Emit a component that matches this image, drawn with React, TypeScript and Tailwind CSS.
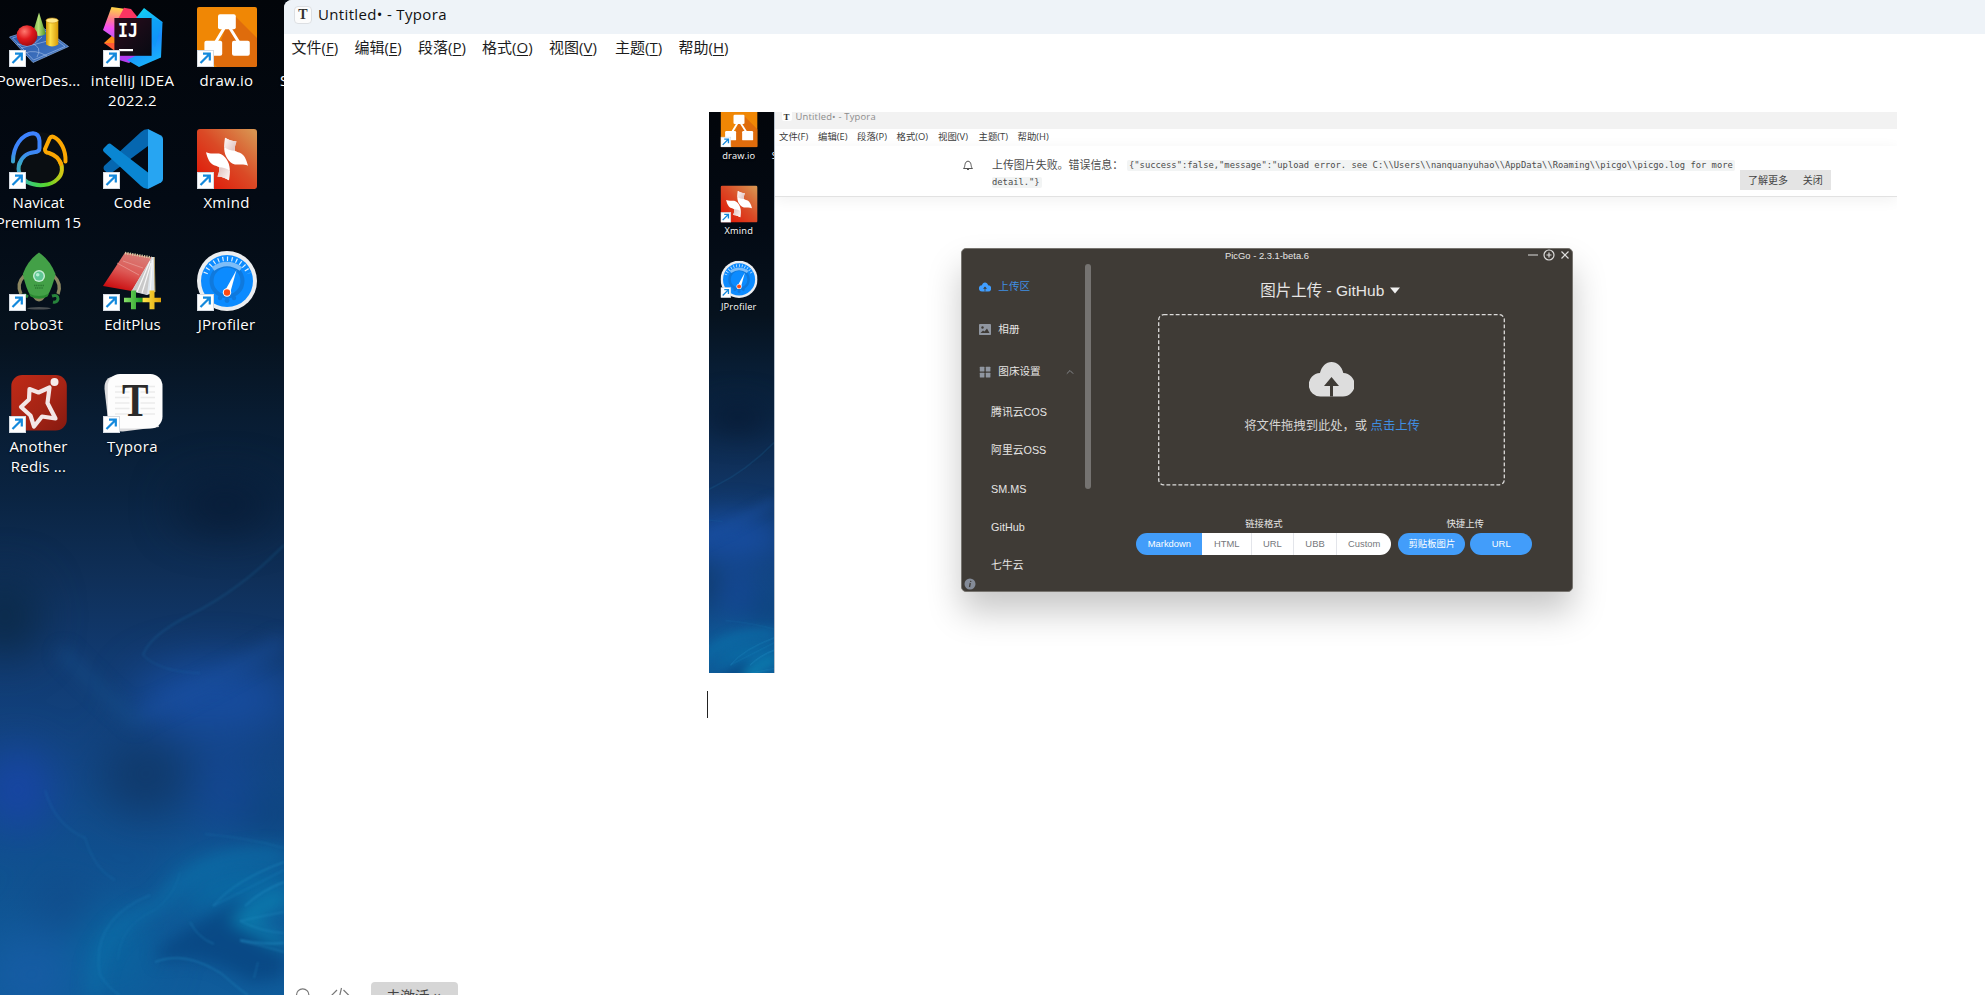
import type { ReactNode } from 'react';

const UI_FONT = "font-['Open_Sans','Noto_Sans_CJK_SC',sans-serif]";
const ARIAL_FONT = "font-['Liberation_Sans','Noto_Sans_CJK_SC',sans-serif]";

function Wallpaper() {
  return (
    <svg className="absolute inset-0" width="284" height="995" viewBox="0 0 284 995" preserveAspectRatio="none">
      <defs>
        <linearGradient id="wp-base" x1="0" y1="0" x2="0" y2="1">
          <stop offset="0" stopColor="#02050a" />
          <stop offset="0.2" stopColor="#030a14" />
          <stop offset="0.34" stopColor="#06121e" />
          <stop offset="0.42" stopColor="#081c32" />
          <stop offset="0.5" stopColor="#0a2442" />
          <stop offset="0.58" stopColor="#0f2f58" />
          <stop offset="0.66" stopColor="#113a70" />
          <stop offset="0.76" stopColor="#124583" />
          <stop offset="0.86" stopColor="#10508f" />
          <stop offset="1" stopColor="#0f5c9b" />
        </linearGradient>
        <filter id="wp-soft" x="-60%" y="-60%" width="220%" height="220%" colorInterpolationFilters="sRGB"><feGaussianBlur stdDeviation="22" /></filter>
        <filter id="wp-mid" x="-60%" y="-60%" width="220%" height="220%" colorInterpolationFilters="sRGB"><feGaussianBlur stdDeviation="8" /></filter>
        <filter id="wp-fine" x="-20%" y="-20%" width="140%" height="140%" colorInterpolationFilters="sRGB"><feGaussianBlur stdDeviation="0.9" /></filter>
      </defs>
      <rect width="284" height="995" fill="url(#wp-base)" />
      <g filter="url(#wp-soft)">
        <ellipse cx="5" cy="616" rx="34" ry="40" fill="#0b2a49" />
        <ellipse cx="225" cy="505" rx="50" ry="24" fill="#081c37" />
        <ellipse cx="215" cy="700" rx="80" ry="38" fill="#174c9e" />
        <ellipse cx="18" cy="790" rx="34" ry="40" fill="#1845a6" />
        <ellipse cx="145" cy="775" rx="44" ry="40" fill="#103a6c" />
        <ellipse cx="225" cy="790" rx="28" ry="36" fill="#15469a" opacity="0.7" />
        <ellipse cx="272" cy="815" rx="30" ry="16" fill="#0c3f78" />
        <ellipse cx="240" cy="890" rx="70" ry="30" fill="#0a6ca6" />
        <ellipse cx="115" cy="950" rx="40" ry="44" fill="#0b639f" />
        <ellipse cx="30" cy="975" rx="44" ry="40" fill="#165ca4" />
        <ellipse cx="65" cy="905" rx="24" ry="20" fill="#124887" />
      </g>
      <g filter="url(#wp-mid)">
        <path d="M158 950 Q190 925 244 897 L232 925 L284 945 V978 L250 982 Q205 950 158 962Z" fill="#084782" opacity="0.85" />
        <path d="M60 650 Q110 700 140 725" stroke="#154f8c" strokeWidth="12" fill="none" opacity="0.5" />
        <path d="M284 640 Q200 690 140 715" stroke="#1a4f9f" strokeWidth="14" fill="none" opacity="0.45" />
        <path d="M284 855 Q200 850 160 905 Q90 930 95 995" stroke="#0c70aa" strokeWidth="14" fill="none" opacity="0.6" />
        <path d="M284 895 L240 920 L284 945" stroke="#0c86b4" strokeWidth="14" fill="none" opacity="0.7" />
      </g>
      <g filter="url(#wp-fine)" fill="none" stroke="#2797cc" strokeWidth="1">
        <path d="M284 545 Q240 590 190 615 Q150 635 143 655" opacity="0.16" strokeWidth="2" />
        <path d="M143 655 Q160 672 200 673" opacity="0.14" strokeWidth="1.5" />
        <path d="M284 862 Q235 880 213 906" opacity="0.6" />
        <path d="M284 870 Q245 890 213 906" opacity="0.4" />
        <path d="M284 882 Q262 890 245 906" opacity="0.8" />
        <path d="M284 933 Q262 932 240 921 Q262 916 284 912" opacity="0.5" />
        <path d="M284 943 Q265 945 240 940" opacity="0.8" />
        <path d="M284 952 Q260 945 240 941" opacity="0.5" />
        <path d="M155 962 Q185 950 222 974 Q240 990 248 995" opacity="0.6" />
        <path d="M190 922 Q198 938 214 944" opacity="0.5" />
        <path d="M180 872 Q175 895 155 910 Q120 925 118 960" opacity="0.2" />
        <path d="M150 895 Q90 920 100 975 Q110 990 120 995" opacity="0.18" strokeWidth="2" />
        <path d="M45 790 Q55 825 85 838 Q95 870 115 880" opacity="0.14" strokeWidth="2" />
        <path d="M284 848 Q250 838 205 834" opacity="0.25" />
        <path d="M258 962 L254 978" opacity="0.4" />
      </g>
    </svg>
  );
}

function PowerDesignerIcon() {
  return (
    <>
      <defs>
        <radialGradient id="pd-ball" cx="0.38" cy="0.3" r="0.75"><stop offset="0" stopColor="#ff7a70" /><stop offset="0.5" stopColor="#e0191d" /><stop offset="1" stopColor="#9c0b10" /></radialGradient>
        <linearGradient id="pd-cyl" x1="0" x2="1"><stop offset="0" stopColor="#c98d06" /><stop offset="0.35" stopColor="#ffe14a" /><stop offset="1" stopColor="#d79a08" /></linearGradient>
        <linearGradient id="pd-cone" x1="0" x2="1"><stop offset="0" stopColor="#6fa83a" /><stop offset="0.45" stopColor="#b6e27a" /><stop offset="1" stopColor="#4b8f22" /></linearGradient>
        <linearGradient id="pd-sheet" x1="0" y1="0" x2="1" y2="1"><stop offset="0" stopColor="#1e4fa3" /><stop offset="1" stopColor="#4b7fc9" /></linearGradient>
      </defs>
      <path d="M0.5 30 L33 20 L59.5 39.5 L24 55.5Z" fill="url(#pd-sheet)" stroke="#8fb0de" strokeWidth="0.7" />
      <path d="M3.5 31 L33 22 L56 39.5 L24.5 53Z M8 37 Q22 42 33 30 M16 46 Q26 42 38 49 M12 41 L46 32 M22 36 q12 4 6 14" fill="none" stroke="#a9c3ea" strokeWidth="0.6" />
      <path d="M30 5.5 L23.5 27 Q30 31 36.8 27Z" fill="url(#pd-cone)" />
      <circle cx="18" cy="28.6" r="10.4" fill="url(#pd-ball)" />
      <path d="M37 13.5 V37.5 Q43 41.5 49.3 37.5 V13.5Z" fill="url(#pd-cyl)" />
      <ellipse cx="43.1" cy="13.5" rx="6.1" ry="2.5" fill="#ffe98a" stroke="#c99110" strokeWidth="0.6" />
    </>
  );
}

function IntellijIcon() {
  return (
    <>
      <defs>
        <linearGradient id="ij-a" x1="0.2" y1="0" x2="0.1" y2="1"><stop offset="0" stopColor="#ffd24a" /><stop offset="0.35" stopColor="#ff7f8a" /><stop offset="0.65" stopColor="#f64ff0" /><stop offset="1" stopColor="#b75cf5" /></linearGradient>
        <linearGradient id="ij-b" x1="0.3" y1="0" x2="0.6" y2="1"><stop offset="0" stopColor="#10d5f2" /><stop offset="0.6" stopColor="#1a8cff" /><stop offset="1" stopColor="#18b6fb" /></linearGradient>
        <linearGradient id="ij-c" x1="0" y1="0" x2="1" y2="1"><stop offset="0" stopColor="#2b0c1c" /><stop offset="1" stopColor="#070a12" /></linearGradient>
      </defs>
      <path d="M1 36 L12 26 V41Z" fill="#ff8a1c" />
      <path d="M8.5 0 L23 2 L16 24 L11.5 31 L0 23Z" fill="url(#ij-a)" />
      <path d="M21 0.8 L28 2 L36 12 L30 16 L14 14Z" fill="#fb3562" />
      <path d="M12 40 L16 53 L26 56 L38 48 L12 48Z" fill="#b23cf0" />
      <path d="M12 36 L1 36 L12 44Z" fill="#ff5a36" />
      <path d="M41 1 L59.5 15 L58 50.5 L36 60 L24 53 L34 48 H46 V12 L33 11Z" fill="url(#ij-b)" />
      <path d="M48.5 11 L59.5 15 L52 40 L48.5 34Z" fill="#0a9bf5" opacity="0.6" />
      <rect x="11.4" y="11" width="37.2" height="37.8" fill="url(#ij-c)" />
      <text x="15" y="29.6" textLength="20" lengthAdjust="spacingAndGlyphs" className="font-['DejaVu_Sans_Mono',monospace] text-[19px] font-bold" fill="#fff">IJ</text>
      <rect x="16" y="42" width="14" height="2.2" fill="#fff" />
    </>
  );
}

function DrawIoIcon() {
  return (
    <>
      <rect width="60" height="60" rx="2" fill="#f08705" />
      <path d="M38 9 L60 31 V58 Q60 60 58 60 H20 L8 48 L24 33.5 L29 20Z" fill="#df6c0c" />
      <path d="M29 18 L17 38 M31 18 L43.5 38" stroke="#fff" strokeWidth="3" />
      <rect x="21" y="7.2" width="17.8" height="15" rx="2" fill="#fff" />
      <rect x="7.4" y="33.7" width="17.8" height="15" rx="2" fill="#fff" />
      <rect x="35" y="33.7" width="17.8" height="15" rx="2" fill="#fff" />
    </>
  );
}

function NavicatIcon() {
  return (
    <>
      <defs>
        <linearGradient id="nv-body" x1="0" y1="0.4" x2="1" y2="0.3"><stop offset="0" stopColor="#3fa6c8" /><stop offset="0.3" stopColor="#3fd160" /><stop offset="0.6" stopColor="#5ad52a" /><stop offset="1" stopColor="#d8c713" /></linearGradient>
        <linearGradient id="nv-left" x1="0" y1="0" x2="0" y2="1"><stop offset="0" stopColor="#3d82ff" /><stop offset="0.6" stopColor="#3d86f8" /><stop offset="1" stopColor="#3aa9c6" /></linearGradient>
      </defs>
      <circle cx="30" cy="30" r="27" fill="#0a0e12" />
      <g fill="none" strokeWidth="4" strokeLinecap="round" strokeLinejoin="round">
        <path d="M10.6 34 C7.500 42 12 49 18 53 C28 58 42 57 48.500 50 C54 45 54 37 50.500 32" stroke="url(#nv-body)" />
        <path d="M4 32.5 C4 17 13 5 24 4.2 Q30 4.5 30.5 12 V19 Q30.500 23 25 23.200 C17 24 12 29 10.6 35" stroke="url(#nv-left)" />
        <path d="M56.5 32.5 C57 22 52 11 44.500 7.8 Q42 7 40.6 9.5 L36 20 Q35.500 23.500 40 24 C46 26 50 29 52 35" stroke="#fca702" />
      </g>
    </>
  );
}

function VsCodeIcon() {
  return (
    <>
      <path d="M45 0 Q41 0 38 3 L1 37 Q0 39 1 41 L5 44.5 Q7 45 8.500 44 L45 17Z" fill="#0667b0" />
      <path d="M1 19 L5 15 Q7 14 8.500 15.500 L45 43.500 V60 Q41 60 38 57 L1 23 Q-1 21 1 19Z" fill="#0a86d2" />
      <path d="M45 0 L58 6.500 Q60 7.500 60 10 V50 Q60 52.500 58 53.500 L45 60Z" fill="#27a5f2" />
    </>
  );
}

function XmindIcon() {
  const blade = 'M9 23.300 C14 25.500 18 24 22 24.500 C28 26 32.500 33 32.800 40 L32 51.200 C29 49.500 25 47.500 20.500 47.500 C22 44 22.500 41 22 38.300 C18 35.500 12.500 38 9 23.300Z';
  const fold = 'M22 38.300 C26 38.500 30.500 39.500 32.800 42 L32 51.200 C29 49.500 25 47.500 20.500 47.500 C22 44 22.500 41 22 38.300Z';
  return (
    <>
      <defs>
        <linearGradient id="xm-bg" x1="0.1" y1="0.9" x2="0.95" y2="0.05"><stop offset="0" stopColor="#e01a09" /><stop offset="0.5" stopColor="#da4a26" /><stop offset="1" stopColor="#d99350" /></linearGradient>
        <linearGradient id="xm-fold" x1="0" y1="0.2" x2="0.9" y2="0.8"><stop offset="0" stopColor="#dfc3c0" /><stop offset="1" stopColor="#fbf1f0" /></linearGradient>
      </defs>
      <rect width="60" height="60" rx="3" fill="url(#xm-bg)" />
      <path d={blade} fill="#fff" />
      <path d={fold} fill="url(#xm-fold)" />
      <g transform="rotate(180 30 30)">
        <path d={blade} fill="#fff" />
        <path d={fold} fill="url(#xm-fold)" />
      </g>
    </>
  );
}

function Robo3tIcon() {
  return (
    <>
      <ellipse cx="30" cy="57.300" rx="12" ry="1.200" fill="#4a4f52" />
      <path d="M15 25 Q7 33 12 43 M45 25 Q53 33 49 43" fill="none" stroke="#8b8660" strokeWidth="3.400" />
      <path d="M12 50 Q11 44 16 44 L19 46" fill="none" stroke="#27843b" strokeWidth="3" />
      <path d="M43 45 Q49 43 49 48 Q48 52 44 51" fill="none" stroke="#27843b" strokeWidth="3" />
      <path d="M24 46 H36 Q34 50 30 50.500 Q26 50 24 46Z" fill="#8b8660" />
      <path d="M30 1.500 Q41 9 46.500 23 Q43 38 38.500 44.500 Q30 50 21.500 44.500 Q17 38 13.800 23 Q19 9 30 1.500Z" fill="#43a047" />
      <path d="M20 42.500 Q30 47.500 40 42.500 L38.500 45.500 Q30 50 21.500 45.500Z" fill="#2b8a32" />
      <circle cx="30" cy="25" r="6" fill="#c7eed6" />
      <circle cx="30" cy="25" r="4.600" fill="#5fc796" />
      <circle cx="28.700" cy="23.800" r="1.800" fill="#b5f0d2" />
      <path d="M25 34.500 H35 M26 37 H34" stroke="#2b7a32" strokeWidth="1.400" strokeDasharray="1.200 0.600" />
    </>
  );
}

function EditPlusIcon() {
  return (
    <>
      <defs>
        <linearGradient id="ep-red" x1="0.7" y1="0" x2="0.3" y2="1"><stop offset="0" stopColor="#d8807a" /><stop offset="0.5" stopColor="#dd5a56" /><stop offset="1" stopColor="#c9090c" /></linearGradient>
        <linearGradient id="ep-green" x1="0" x2="1"><stop offset="0" stopColor="#8be06a" /><stop offset="1" stopColor="#169a22" /></linearGradient>
        <linearGradient id="ep-gold" x1="0" x2="1"><stop offset="0" stopColor="#ffe94e" /><stop offset="1" stopColor="#e0a106" /></linearGradient>
      </defs>
      <path d="M48 6 L51.500 6 L52 41 L44 44 L28 40Z" fill="#dfe6ec" />
      <path d="M48.500 7 L44 43.500 L29 40Z" fill="#c9c9c9" />
      <path d="M47 10 L34 41 M48 12 L39 42 M49.500 9 L47 42" stroke="#f7f7f7" strokeWidth="1.200" />
      <path d="M51.300 6 L52 41" stroke="#b39b62" strokeWidth="1" />
      <path d="M22 1.500 L48.500 6.500 L28.500 40 L0 35Z" fill="url(#ep-red)" />
      <path d="M14 12 L36 24 M20 10 L40 17" stroke="#eeb0aa" strokeWidth="0.800" opacity="0.700" />
      <path d="M22 2 L48.500 6.500" stroke="#d9cfa6" strokeWidth="2.600" strokeDasharray="1.200 1.200" />
      <path d="M28 39.500 h5 v7.300 h6.500 v4.500 h-6.500 v7 h-5 v-7 h-7 v-4.500 h7Z" fill="url(#ep-green)" />
      <path d="M46.500 39.500 h5 v7.300 h6.500 v4.500 h-6.500 v7 h-5 v-7 h-7 v-4.500 h7Z" fill="url(#ep-gold)" />
    </>
  );
}

function JProfilerIcon() {
  return (
    <>
      <circle cx="30" cy="30" r="30" fill="#eceef0" />
      <circle cx="30" cy="30" r="26" fill="#0c8bff" />
      <circle cx="30" cy="30" r="15.500" fill="none" stroke="#0f79dd" strokeWidth="4" />
      <path d="M16 18 Q30 8 44 18" fill="none" stroke="#7dbdf8" strokeWidth="4.500" />
      <path d="M8.500 22.500 A23 23 0 0 1 51.500 22.500" fill="none" stroke="#dcefff" strokeWidth="4.500" strokeDasharray="1.200 3.400" />
      <g fill="#0f79dd"><circle cx="30" cy="49.500" r="2.400" /><circle cx="23" cy="47" r="2.200" /><circle cx="37" cy="47" r="2.200" /></g>
      <path d="M27.300 41 L39.500 19 L33 42.500Z" fill="#fff" />
      <circle cx="30" cy="41.500" r="4.200" fill="#fff" />
      <circle cx="30" cy="41.500" r="3.200" fill="#ff4a12" />
    </>
  );
}

function RedisIcon() {
  return (
    <>
      <defs>
        <linearGradient id="rd-bg" x1="0" y1="0" x2="1" y2="1"><stop offset="0" stopColor="#bf2a17" /><stop offset="0.55" stopColor="#a62415" /><stop offset="1" stopColor="#861a10" /></linearGradient>
      </defs>
      <rect x="2.300" y="2" width="55.500" height="55.500" rx="11" fill="url(#rd-bg)" />
      <path d="M20.500 16 L29.500 19.500 L40.500 14.500 L38.500 30 L46.500 45.500 L33 43.500 L25 53.500 L21.500 42.500 L12 34 L20 26.500Z" fill="none" stroke="#f3e6e6" strokeWidth="4.200" strokeLinejoin="round" />
      <circle cx="45.500" cy="9" r="4" fill="#f6eceb" />
    </>
  );
}

function TyporaIcon() {
  return (
    <>
      <path d="M1.500 16 Q1 4 12 3 H40 L56 54 L20 58.500 Q7 59 5 47Z" fill="#dcdcde" />
      <rect x="4.800" y="1" width="54.700" height="54.500" rx="12" fill="#fdfdfd" />
      <path d="M12 13.500 h40 M12 19 h40 M12 24.500 h40 M12 30 h40 M12 35.500 h40 M12 41 h40" stroke="#ebebeb" strokeWidth="1.600" />
      <rect x="26.500" y="13" width="11" height="30" fill="#fdfdfd" />
      <text x="19" y="43" textLength="26.500" lengthAdjust="spacingAndGlyphs" className="font-['Liberation_Serif',serif] text-[46px] font-bold" fill="#2b2b2b">T</text>
    </>
  );
}

type DesktopItem = { icon?: ReactNode; lines: string[]; tracking?: string };

const desktopItems: (DesktopItem | null)[] = [
  { icon: <PowerDesignerIcon />, lines: ['PowerDes...'], tracking: 'tracking-[0.100px]' },
  { icon: <IntellijIcon />, lines: ['intelliJ IDEA', '2022.2'], tracking: 'tracking-[0.350px]' },
  { icon: <DrawIoIcon />, lines: ['draw.io'], tracking: 'tracking-[0.250px]' },
  { lines: ['S'] },
  { icon: <NavicatIcon />, lines: ['Navicat', 'Premium 15'] },
  { icon: <VsCodeIcon />, lines: ['Code'], tracking: 'tracking-[0.300px]' },
  { icon: <XmindIcon />, lines: ['Xmind'], tracking: 'tracking-[0.300px]' },
  null,
  { icon: <Robo3tIcon />, lines: ['robo3t'], tracking: 'tracking-[0.400px]' },
  { icon: <EditPlusIcon />, lines: ['EditPlus'], tracking: 'tracking-[0.100px]' },
  { icon: <JProfilerIcon />, lines: ['JProfiler'], tracking: 'tracking-[0.250px]' },
  null,
  { icon: <RedisIcon />, lines: ['Another', 'Redis ...'], tracking: 'tracking-[0.200px]' },
  { icon: <TyporaIcon />, lines: ['Typora'], tracking: 'tracking-[0.400px]' },
];

function Desktop({ className = '' }: { className?: string }) {
  return (
    <div className={`relative h-[995px] w-[284px] shrink-0 overflow-hidden bg-[#030810] ${className}`}>
      <Wallpaper />
      <div className="relative -ml-2 grid w-[376px] auto-rows-[122px] grid-cols-4 pt-[7px]">
        {desktopItems.map((item, i) => (
          <div key={i} className="flex flex-col items-center">
            {item && (
              <>
                <svg width="60" height="60" viewBox="0 0 60 60">
                  {item.icon}
                  {item.icon && (
                    <g>
                      <rect x="0.500" y="43.500" width="16" height="16" fill="#fff" stroke="#d5dbe2" />
                      <path d="M3.500 56 L12.500 47 M6 46.700 H12.800 V53.500" fill="none" stroke="#1489dc" strokeWidth="2.200" />
                    </g>
                  )}
                </svg>
                <div className={`flex flex-col items-center pt-[3px] text-[15px] leading-5 whitespace-nowrap text-white ${item.tracking ?? ''} ${item.icon ? 'mr-px' : 'mr-[74px]'} [text-shadow:0_1px_2px_rgba(0,0,0,0.9)]`}>
                  {item.lines.map((line) => (
                    <span key={line}>{line}</span>
                  ))}
                </div>
              </>
            )}
          </div>
        ))}
      </div>
    </div>
  );
}

const menus = [
  { name: '文件', key: 'F', outer: 'w-[63px]', inner: 'w-[39px]' },
  { name: '编辑', key: 'E', outer: 'w-[63.500px]', inner: 'w-[39px]' },
  { name: '段落', key: 'P', outer: 'w-[64px]', inner: 'w-[39.500px]' },
  { name: '格式', key: 'O', outer: 'w-[67px]', inner: 'w-[41.500px]' },
  { name: '视图', key: 'V', outer: 'w-[66px]', inner: 'w-[40.500px]' },
  { name: '主题', key: 'T', outer: 'w-[63.500px]', inner: 'w-[39px]' },
  { name: '帮助', key: 'H', outer: 'w-[60px]', inner: 'w-[40px]' },
];

function BellIcon() {
  return (
    <svg width="12" height="12" viewBox="0 0 12 12" fill="none" stroke="#555" strokeWidth="1">
      <path d="M1.500 8.500 H10.500 C9.300 7.500 9.300 6 9 4.500 C8.700 2.500 7.500 1.200 6 1.200 S3.300 2.500 3 4.500 C2.700 6 2.700 7.500 1.500 8.500Z" />
      <path d="M5 9.200 Q6 10.500 7 9.200" />
    </svg>
  );
}

function CloudIcon({ className, fill, cut }: { className?: string; fill: string; cut: string }) {
  return (
    <svg className={className} viewBox="0 0 45 34.500">
      <path d="M12 34.500 A11.500 11.500 0 0 1 11 11 C12.500 4.500 17 0 22.500 0 S33 4.500 34.300 11 A11.500 11.500 0 0 1 33.500 34.500Z" fill={fill} />
      <path d="M22.500 15 L30 24 H24 V34.500 H21 V24 H15Z" fill={cut} />
    </svg>
  );
}

const hosts = ['腾讯云COS', '阿里云OSS', 'SM.MS', 'GitHub', '七牛云'];

const formats = [
  { label: 'Markdown', style: 'w-[66px] bg-[#429dfa] text-white' },
  { label: 'HTML', style: 'w-[48.500px] bg-white text-[#75777b]' },
  { label: 'URL', style: 'w-[42px] border-l border-[#e3e5ea] bg-white text-[#75777b]' },
  { label: 'UBB', style: 'w-[43.200px] border-l border-[#e3e5ea] bg-white text-[#75777b]' },
  { label: 'Custom', style: 'w-[55.300px] border-l border-[#e3e5ea] bg-white text-[#75777b]' },
];

function PicGoWindow() {
  return (
    <div className={`absolute top-[135.500px] left-[252.300px] h-[344.800px] w-[611.400px] overflow-hidden rounded-[5px] border border-[#77746f] bg-[#3f3b36] text-[#e6e5e4] shadow-[0_20px_34px_0_rgba(0,0,0,0.22)] ${ARIAL_FONT}`}>
      <header className="relative flex h-[15px] items-center justify-center text-[9.400px] leading-[14px]">
        <span className="-mt-px">PicGo - 2.3.1-beta.6</span>
        <svg className="absolute top-[-0.500px] right-[-1px]" width="48" height="15" viewBox="0 0 48 15" fill="none" stroke="#dcdbda" strokeWidth="1.200">
          <path d="M3 7 H13 M21.500 7 h5 M24 4.500 v5 M36.500 3.500 L43.500 10.500 M43.500 3.500 L36.500 10.500" />
          <circle cx="24" cy="7" r="5" />
        </svg>
      </header>
      <div className="flex">
        <nav className="relative h-[328px] w-[130px] text-[10.600px]">
          <div className="flex flex-col pt-[1.500px]">
            <div className="flex h-[43px] items-center gap-[7px] pl-[17px] text-[#3f8fe2]">
              <CloudIcon className="h-[10px] w-3" fill="#409eff" cut="#3f3b36" />
              上传区
            </div>
            <div className="flex h-[43px] items-center gap-[7px] pl-[17px]">
              <svg width="12" height="11" viewBox="0 0 12 11"><rect width="12" height="11" rx="0.800" fill="#9096a0" /><circle cx="3.500" cy="3.500" r="1.200" fill="#3f3b36" /><path d="M1.500 9 L4 6.500 L5.500 7.500 L8 4.500 L10.500 9Z" fill="#3f3b36" /></svg>
              相册
            </div>
            <div className="flex h-[42px] items-center gap-[7px] pl-[17px]">
              <svg width="12" height="12" viewBox="0 0 12 12" fill="#9096a0"><rect x="0.800" y="0.800" width="4.600" height="4.600" rx="0.500" /><rect x="6.800" y="0.800" width="4.600" height="4.600" rx="0.500" /><rect x="0.800" y="6.800" width="4.600" height="4.600" rx="0.500" /><rect x="6.800" y="6.800" width="4.600" height="4.600" rx="0.500" /></svg>
              图床设置
              <svg className="ml-[18px]" width="8" height="6" viewBox="0 0 8 6" fill="none" stroke="#85878a"><path d="M0.800 4.700 L4 1.500 L7.200 4.700" /></svg>
            </div>
            {hosts.map((host) => (
              <div key={host} className="flex h-[38.300px] items-center pl-[28.800px] text-[10.800px]">{host}</div>
            ))}
          </div>
          <div className="absolute top-0 right-[1px] h-[225px] w-[6px] rounded-full bg-[#757371]" />
          <svg className="absolute bottom-[2px] left-[2px]" width="12" height="12" viewBox="0 0 12 12"><circle cx="6" cy="6" r="5.500" fill="#848b98" /><path d="M6.800 2.800 L6.600 3.800 M6.300 5 L5.500 9" stroke="#3f3b36" strokeWidth="1.300" /></svg>
        </nav>
        <main className="flex flex-1 flex-col items-center pt-[14px] pl-[7px]">
          <h1 className="ml-[-10.500px] flex h-[26px] items-center gap-[6px] text-[15.500px]">
            图片上传 - GitHub
            <svg width="10" height="7" viewBox="0 0 10 7"><path d="M0 0.500 H10 L5 6.500Z" fill="#f0f0f0" /></svg>
          </h1>
          <div className="relative mt-[10.500px] ml-[-7px] flex h-[172px] w-[347px] flex-col items-center pt-[48px]">
            <svg className="absolute inset-0" width="347" height="172" viewBox="0 0 347 172">
              <rect x="0.700" y="0.700" width="345.600" height="170.100" rx="5" fill="none" stroke="#dcdbda" strokeWidth="1.300" strokeDasharray="3.900 2.100" />
            </svg>
            <CloudIcon className="h-[34.500px] w-[45px]" fill="#dddddd" cut="#3f3b36" />
            <p className="mt-[18.500px] text-[12.300px] leading-[22px] whitespace-pre text-[#d5d4d3]">
              将文件拖拽到此处，或 <span className="text-[#3f8fe2]">点击上传</span>
            </p>
          </div>
          <div className="mt-[29px] ml-[-2.500px] flex gap-[7px] text-[9.400px]">
            <div className="flex flex-col items-center">
              <div className="h-[18px] leading-[18px]">链接格式</div>
              <div className="flex h-[21.700px] overflow-hidden rounded-full">
                {formats.map((f) => (
                  <span key={f.label} className={`flex items-center justify-center pt-px ${f.style}`}>{f.label}</span>
                ))}
              </div>
            </div>
            <div className="flex flex-col items-center">
              <div className="h-[18px] leading-[18px]">快捷上传</div>
              <div className="flex h-[21.700px] gap-[5px] text-white">
                <span className="flex w-[67px] items-center justify-center rounded-full bg-[#429dfa]">剪贴板图片</span>
                <span className="flex w-[61.700px] items-center justify-center rounded-full bg-[#429dfa] pt-px">URL</span>
              </div>
            </div>
          </div>
        </main>
      </div>
    </div>
  );
}

function EmbeddedPicture() {
  return (
    <figure className="relative flex h-[561px] w-[1188px] overflow-hidden bg-white">
      <div className="h-full w-[65px] shrink-0 overflow-hidden">
        <Desktop className="-mt-[6.300px] -ml-[110.500px] origin-top-left scale-[0.617]" />
      </div>
      <div className="flex flex-1 flex-col border-l border-[#b9c2cc]">
        <div className="flex h-[17px] items-start gap-1 bg-[#f2f2f2] pl-[6.500px] text-[9.400px] leading-[10px] tracking-[0.200px] text-[#8c8c8c]">
          <span className="flex h-[9px] w-[10px] items-center justify-center rounded-b-[2px] bg-white font-['Liberation_Serif',serif] text-[9px] font-bold text-[#333]">T</span>
          <span>Untitled• - Typora</span>
        </div>
        <div className="flex h-[17px] items-center pl-[4px] text-[9.400px] text-[#3c3c3c]">
          {menus.map((m) => (
            <span key={m.key} className={`shrink-0 ${m.inner}`}>{m.name}({m.key})</span>
          ))}
        </div>
        <div className="flex h-[51px] border-b border-[#e2e2e2] pt-[10px] shadow-[0_3px_14px_rgba(0,0,0,0.06)]">
          <div className="w-[217px] shrink-0 pt-[4px] pl-[187px]">
            <BellIcon />
          </div>
          <div className="w-[748px] shrink-0 text-[10.950px] leading-[17px] text-[#4c4c4c]">
            <div className="flex items-center whitespace-pre">
              <span className="w-[135px]">上传图片失败。错误信息：</span>
              <code className="mt-[2px] h-[11px] rounded-[2px] bg-[#f2f4f4] px-[2px] font-['DejaVu_Sans_Mono',monospace] text-[8.815px] leading-[11px]">
                {'{"success":false,"message":"upload error. see C:\\\\Users\\\\nanquanyuhao\\\\AppData\\\\Roaming\\\\picgo\\\\picgo.log for more'}
              </code>
            </div>
            <div className="flex h-[17px] items-center">
              <code className="mt-[2px] h-[11px] rounded-[2px] bg-[#f2f4f4] pr-[2px] font-['DejaVu_Sans_Mono',monospace] text-[8.815px] leading-[11px]">{'detail."}'}</code>
            </div>
          </div>
          <div className="mt-[14.300px] flex h-[20px] w-[90.700px] items-center justify-between bg-[#e4e4e4] px-[8px] pt-px text-[10px] text-[#444]">
            <span>了解更多</span>
            <span>关闭</span>
          </div>
        </div>
      </div>
      <PicGoWindow />
    </figure>
  );
}

export default function App() {
  return (
    <div className={`flex h-[995px] w-[1985px] overflow-hidden bg-[#050b13] ${UI_FONT}`}>
      <Desktop />
      <div className="flex flex-1 flex-col overflow-hidden rounded-tl-lg bg-white">
        <header className="flex h-[34px] shrink-0 items-center gap-[6px] bg-[#eef3f8] pb-[5px] pl-[10px] text-[15px] tracking-[0.340px] text-[#111]">
          <span className="flex h-[18px] w-[18px] items-center justify-center rounded-[4px] border border-[#dcdfe3] bg-[#fcfcfc] font-['Liberation_Serif',serif] text-[14px] leading-none font-bold text-[#333]">T</span>
          <span>Untitled• - Typora</span>
        </header>
        <nav className="flex h-[28px] shrink-0 items-center pb-[2px] pl-[7.500px] text-[15px] text-[#1c1c1c]">
          {menus.map((m) => (
            <span key={m.key} className={`shrink-0 ${m.outer}`}>
              {m.name}(<span className="underline decoration-1 underline-offset-2">{m.key}</span>)
            </span>
          ))}
        </nav>
        <div className="flex-1 pt-[50px] pl-[423px]">
          <div className="pl-[2px]">
            <EmbeddedPicture />
          </div>
          <div className="mt-[18px] h-[27px] w-px bg-[#222]" />
        </div>
        <footer className="flex h-[13px] shrink-0 items-start overflow-hidden pl-[11px]">
          <svg className="mt-[6px]" width="16" height="16" viewBox="0 0 16 16" fill="none" stroke="#777" strokeWidth="1.200"><circle cx="7.700" cy="7" r="6.200" /></svg>
          <svg className="mt-[5px] ml-[19px]" width="20" height="16" viewBox="0 0 20 16" fill="none" stroke="#777" strokeWidth="1.200"><path d="M7 3 L1.500 8.500 L7 14 M13.500 3 L19 8.500 L13.500 14 M11.500 1 L8 16" /></svg>
          <span className="ml-[21px] flex h-[30px] w-[87px] items-center justify-center gap-[4px] rounded-[4px] bg-[#d6d6d6] pr-[2px] text-[14.500px] text-[#444]">
            未激活 <span className="text-[13px]">×</span>
          </span>
        </footer>
      </div>
    </div>
  );
}
